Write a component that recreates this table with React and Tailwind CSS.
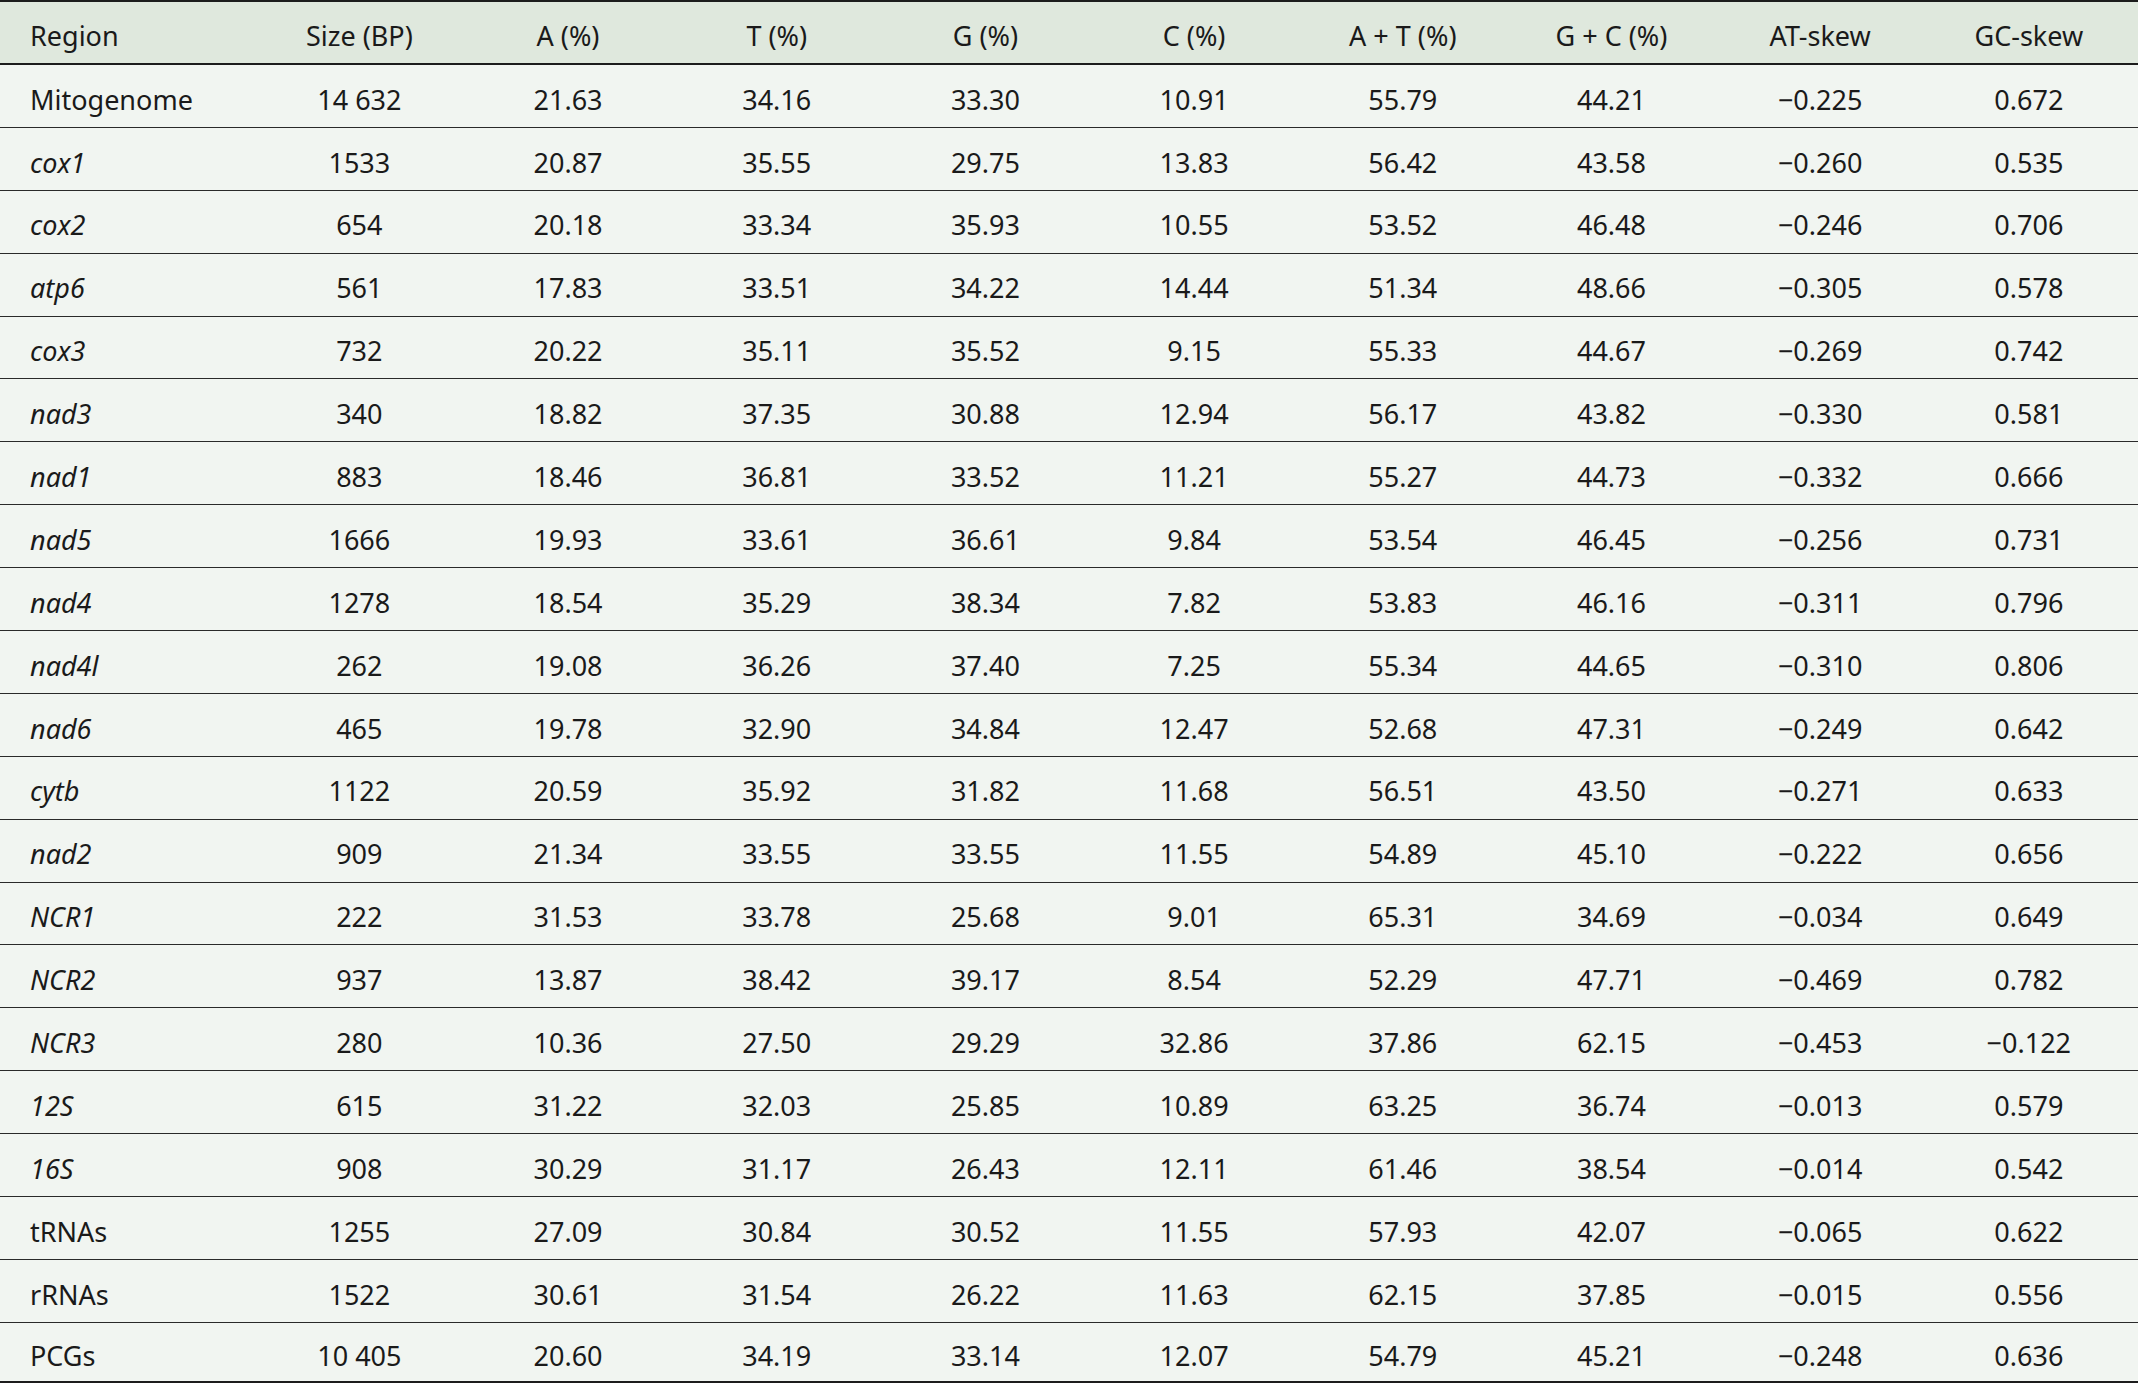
import React from 'react';

const headers = ['Region', 'Size (BP)', 'A (%)', 'T (%)', 'G (%)', 'C (%)', 'A + T (%)', 'G + C (%)', 'AT-skew', 'GC-skew'];

// [region, italic, values...]
const rows = [
  ['Mitogenome', false, '14 632', '21.63', '34.16', '33.30', '10.91', '55.79', '44.21', '\u22120.225', '0.672'],
  ['cox1', true, '1533', '20.87', '35.55', '29.75', '13.83', '56.42', '43.58', '\u22120.260', '0.535'],
  ['cox2', true, '654', '20.18', '33.34', '35.93', '10.55', '53.52', '46.48', '\u22120.246', '0.706'],
  ['atp6', true, '561', '17.83', '33.51', '34.22', '14.44', '51.34', '48.66', '\u22120.305', '0.578'],
  ['cox3', true, '732', '20.22', '35.11', '35.52', '9.15', '55.33', '44.67', '\u22120.269', '0.742'],
  ['nad3', true, '340', '18.82', '37.35', '30.88', '12.94', '56.17', '43.82', '\u22120.330', '0.581'],
  ['nad1', true, '883', '18.46', '36.81', '33.52', '11.21', '55.27', '44.73', '\u22120.332', '0.666'],
  ['nad5', true, '1666', '19.93', '33.61', '36.61', '9.84', '53.54', '46.45', '\u22120.256', '0.731'],
  ['nad4', true, '1278', '18.54', '35.29', '38.34', '7.82', '53.83', '46.16', '\u22120.311', '0.796'],
  ['nad4l', true, '262', '19.08', '36.26', '37.40', '7.25', '55.34', '44.65', '\u22120.310', '0.806'],
  ['nad6', true, '465', '19.78', '32.90', '34.84', '12.47', '52.68', '47.31', '\u22120.249', '0.642'],
  ['cytb', true, '1122', '20.59', '35.92', '31.82', '11.68', '56.51', '43.50', '\u22120.271', '0.633'],
  ['nad2', true, '909', '21.34', '33.55', '33.55', '11.55', '54.89', '45.10', '\u22120.222', '0.656'],
  ['NCR1', true, '222', '31.53', '33.78', '25.68', '9.01', '65.31', '34.69', '\u22120.034', '0.649'],
  ['NCR2', true, '937', '13.87', '38.42', '39.17', '8.54', '52.29', '47.71', '\u22120.469', '0.782'],
  ['NCR3', true, '280', '10.36', '27.50', '29.29', '32.86', '37.86', '62.15', '\u22120.453', '\u22120.122'],
  ['12S', true, '615', '31.22', '32.03', '25.85', '10.89', '63.25', '36.74', '\u22120.013', '0.579'],
  ['16S', true, '908', '30.29', '31.17', '26.43', '12.11', '61.46', '38.54', '\u22120.014', '0.542'],
  ['tRNAs', false, '1255', '27.09', '30.84', '30.52', '11.55', '57.93', '42.07', '\u22120.065', '0.622'],
  ['rRNAs', false, '1522', '30.61', '31.54', '26.22', '11.63', '62.15', '37.85', '\u22120.015', '0.556'],
  ['PCGs', false, '10 405', '20.60', '34.19', '33.14', '12.07', '54.79', '45.21', '\u22120.248', '0.636'],
];

const gridCols = 'grid grid-cols-[255px_repeat(9,208.7px)] items-center pt-[8px]';

const App = () => {
  return (
    <div
      className="w-full h-screen flex flex-col border-t-2 border-b-2 border-[#1c1c1c] bg-[#f1f5f1] text-[#1a1a1a] text-[27px]"
      style={{ fontFamily: '"Noto Sans", "Open Sans", sans-serif' }}
    >
      {/* Header */}
      <div className={`${gridCols} h-[63px] shrink-0 bg-[#dfe8dd] border-b-2 border-[#1c1c1c]`}>
        {headers.map((h, i) => (
          <div key={h} className={i === 0 ? 'pl-[30px]' : 'text-center'}>{h}</div>
        ))}
      </div>

      {rows.map((r, idx) => {
        const last = idx === rows.length - 1;
        return (
          <div
            key={r[0]}
            className={`${gridCols} ${last ? 'flex-1' : 'h-[62.9px] shrink-0 border-b border-[#2a2a2a]'}`}
          >
            <div className={`pl-[30px] ${r[1] ? 'italic' : ''}`}>{r[0]}</div>
            {r.slice(2).map((v, j) => (
              <div key={j} className="text-center">{v}</div>
            ))}
          </div>
        );
      })}
    </div>
  );
};

export default App;
